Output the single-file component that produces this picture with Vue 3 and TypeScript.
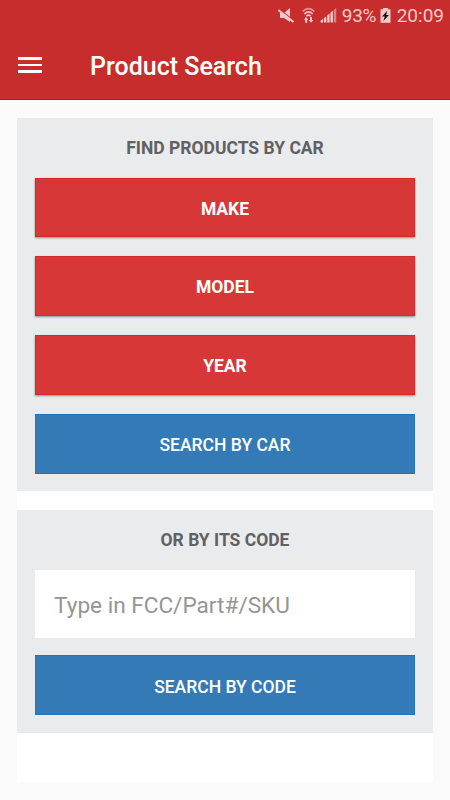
<script setup lang="ts">
import { ref } from 'vue'

const filters: string[] = ['Make', 'Model', 'Year']
const code = ref('')
</script>

<template>
  <div class="screen">
    <header class="header">
      <div class="status">
        <svg class="mute" width="18" height="18" viewBox="0 0 18 18">
          <path d="M2 6h4l6-5v14l-6-4H2z" fill="#f4c9c9" />
          <path d="M1 2L16 13.800" stroke="#c82d2d" stroke-width="1.200" />
          <path d="M.3 3L15.500 15" stroke="#f4c9c9" stroke-width="2" />
        </svg>
        <svg class="wifi" width="14" height="18" viewBox="0 0 14 18">
          <g fill="none" stroke="#f4c9c9" stroke-width="1.600">
            <path d="M.6 4.500Q6.500-1.300 12.400 4.500" opacity=".65" />
            <path d="M2.300 7Q6.500 2.900 10.700 7" />
            <path d="M4.300 9.200Q6.500 7 8.700 9.200" />
          </g>
          <path d="M4.100 10.100L6.400 12.800H5.200v2.900H3.200v-2.900H1.800zM9 15.700L6.700 13H8v-2.900h2v2.900h1.400z" fill="#f4c9c9" />
        </svg>
        <svg class="signal" width="17" height="18" viewBox="0 0 17 18">
          <path d="M.6 15.500v-2l2.400-1.600v3.600zM3.900 15.500v-4.400l2.400-1.700v6.100zM7.200 15.500V8.400l2.400-1.800v8.900zM10.500 15.500V5.600l2.400-1.800v11.700z" fill="#f4c9c9" />
          <path d="M13.800 15.500V3l2.400-2v14.500z" fill="#df8585" />
        </svg>
        <span class="percent">93%</span>
        <svg class="battery" width="11" height="18" viewBox="0 0 11 18">
          <path d="M3 1h5v1.300h2.500v13.500H.5V2.300H3z" fill="#f4c9c9" />
          <path d="M7.200 3.800L2 9.500h2.700L3.400 14 9 8H6.200z" fill="#161313" />
        </svg>
        <span class="time">20:09</span>
      </div>
      <div class="toolbar">
        <button class="menu" aria-label="Menu">
          <span></span><span></span><span></span>
        </button>
        <h1>Product Search</h1>
      </div>
    </header>

    <main class="card">
      <section class="panel by-car">
        <h2>Find products by car</h2>
        <button v-for="filter in filters" :key="filter" class="btn filter">{{ filter }}</button>
        <button class="btn search">Search by car</button>
      </section>
      <section class="panel by-code">
        <h2>Or by its code</h2>
        <input v-model="code" type="text" placeholder="Type in FCC/Part#/SKU" />
        <button class="btn search">Search by code</button>
      </section>
    </main>
  </div>
</template>

<style>
body {
  margin: 0;
}
</style>

<style scoped>
.screen {
  box-sizing: border-box;
  width: 450px;
  height: 800px;
  overflow: hidden;
  background: #fafafa;
  font-family: Roboto, "Liberation Sans", sans-serif;
}
button {
  border: 0;
  padding: 0;
  font-family: inherit;
}
.header {
  box-sizing: border-box;
  height: 100px;
  background: #c82d2d;
  border-bottom: 1px solid #bd1717;
}
.status {
  display: flex;
  align-items: center;
  justify-content: flex-end;
  height: 31px;
  padding-right: 6px;
  color: #f4c9c9;
  font-size: 19px;
  line-height: 31px;
  white-space: nowrap;
}
.wifi {
  margin-left: 6px;
}
.signal {
  margin-left: 4px;
}
.percent {
  margin-left: 5px;
  letter-spacing: -0.300px;
}
.battery {
  margin-left: 4px;
}
.time {
  margin-left: 5.500px;
}
.toolbar {
  display: flex;
  align-items: center;
  height: 68px;
  padding-left: 18px;
}
.menu {
  display: flex;
  flex-direction: column;
  gap: 4px;
  width: 24px;
  background: none;
}
.menu span {
  height: 2.700px;
  background: #fff;
}
h1 {
  margin: 4px 0 0 48px;
  color: #fff;
  font-size: 25px;
  font-weight: 500;
  line-height: 30px;
}
.card {
  display: flex;
  flex-direction: column;
  gap: 19px;
  box-sizing: border-box;
  height: 664.400px;
  margin: 18px 17px 0;
  background: #fff;
}
.panel {
  display: flex;
  flex-direction: column;
  box-sizing: border-box;
  padding: 0 18px;
  background: #eaebed;
}
.by-car {
  height: 373px;
}
.by-code {
  height: 223px;
}
h2 {
  margin: 0;
  height: 60px;
  color: #606163;
  font-size: 17.500px;
  font-weight: 700;
  line-height: 60px;
  text-align: center;
  text-transform: uppercase;
}
.btn {
  flex: none;
  height: 60px;
  color: #fff;
  font-size: 17.500px;
  line-height: 62px;
  text-align: center;
  text-transform: uppercase;
}
.filter {
  height: 59.500px;
  margin-bottom: 19.300px;
  background: #d83737;
  box-shadow: inset 0 0 0 1px #d62a2a, 0 1px 2px rgba(0, 0, 0, 0.4);
  font-weight: 700;
}
.by-car h2 {
  height: 59.600px;
}
.search {
  background: #337ab7;
  box-shadow: inset 0 0 0 1px #2874b3;
  font-weight: 500;
}
.by-code .search {
  padding-top: 1px;
}
input {
  box-sizing: border-box;
  width: 100%;
  height: 68px;
  margin: 0 0 17.300px;
  padding: 2px 19px 0;
  border: 0;
  border-radius: 0;
  outline: 0;
  background: #fff;
  color: #444;
  font-family: inherit;
  font-size: 22.600px;
}
input::placeholder {
  color: #959595;
  opacity: 1;
}
</style>
